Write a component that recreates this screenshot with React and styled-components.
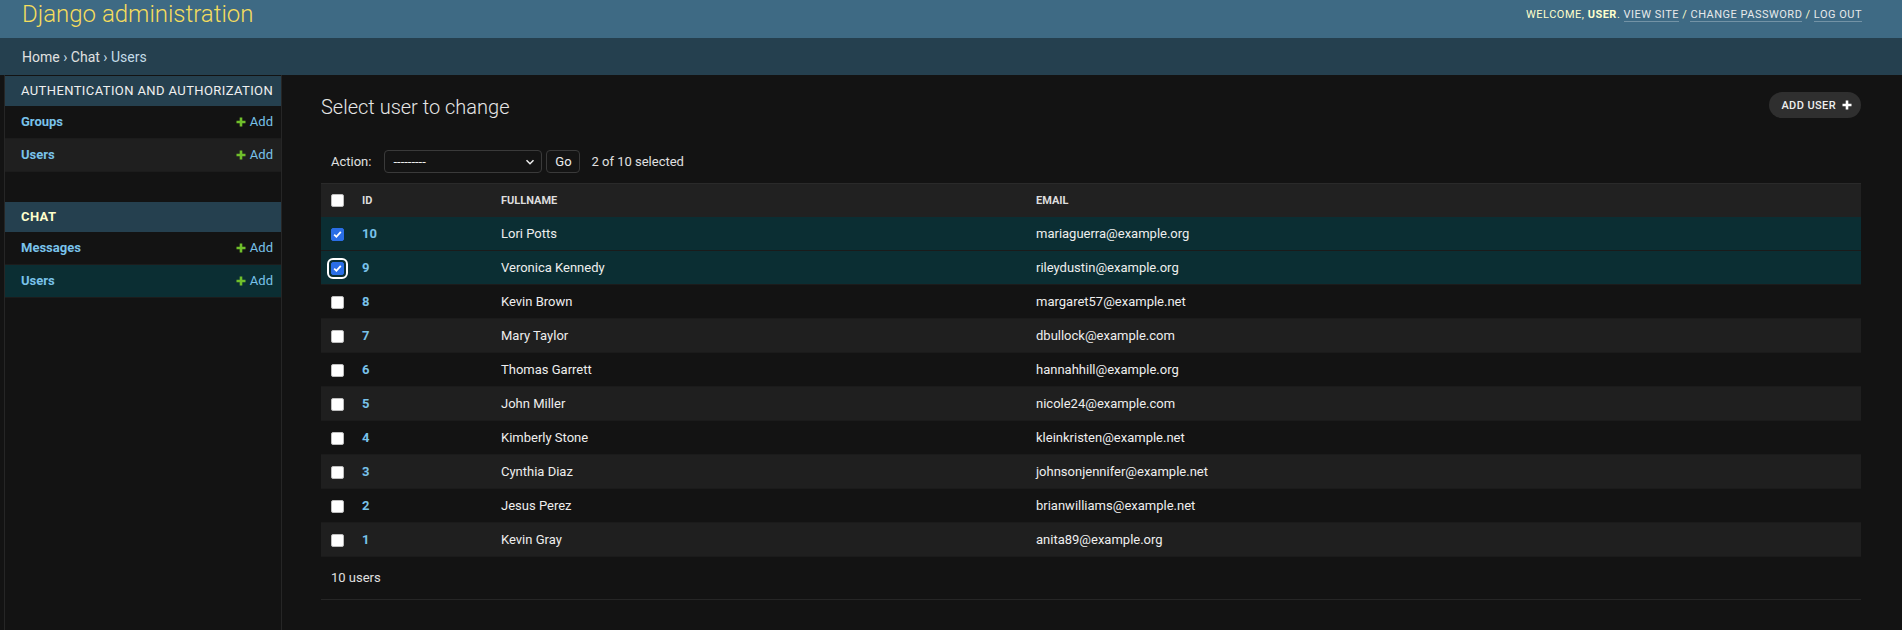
import React from 'react';
import styled, { createGlobalStyle } from 'styled-components';

const GlobalStyle = createGlobalStyle`
  html, body {
    margin: 0;
    padding: 0;
    background: #131313;
    color: #eeeeee;
    font-family: Roboto, "Liberation Sans", Arial, sans-serif;
    font-size: 14px;
  }
  * { box-sizing: border-box; }
`;

const Header = styled.div`
  height: 38px;
  background: #3e6a84;
  display: flex;
  justify-content: space-between;
  align-items: flex-start;
  padding: 0 40px 0 22px;
`;

const Branding = styled.div`
  font-size: 24px;
  font-weight: 300;
  line-height: 28px;
  color: #f5dd5d;
`;

const UserTools = styled.div`
  font-size: 11px;
  line-height: 30px;
  letter-spacing: 0.5px;
  text-transform: uppercase;
  color: #ffffcc;
  b { font-weight: 700; }
`;

const ToolLink = styled.a`
  color: #e6e9eb;
  text-decoration: none;
  border-bottom: 1px solid rgba(255, 255, 255, 0.28);
`;

const Breadcrumbs = styled.div`
  height: 37px;
  background: #25404f;
  display: flex;
  align-items: center;
  padding: 0 22px;
  font-size: 14px;
  color: #c4dce8;
  a { color: #e0e0e0; text-decoration: none; }
`;

const Main = styled.div`
  display: flex;
  min-height: calc(100vh - 75px);
`;

const Toggle = styled.div`
  width: 5px;
  flex-shrink: 0;
  border-right: 1px solid #262626;
`;

const Sidebar = styled.nav`
  width: 277px;
  flex-shrink: 0;
  padding-top: 1px;
  border-right: 1px solid #262626;
`;

const Module = styled.div`
  margin-bottom: 30px;
`;

const Caption = styled.div`
  height: 30px;
  display: flex;
  align-items: center;
  padding: 0 12px 1px 16px;
  background: #25404f;
  font-size: 13px;
  letter-spacing: 0.4px;
  white-space: nowrap;
  text-transform: uppercase;
  color: ${p => (p.$current ? '#ffffcc' : '#f0f0f0')};
  font-weight: ${p => (p.$current ? 700 : 400)};
`;

const NavRow = styled.div`
  height: 33px;
  display: flex;
  align-items: center;
  justify-content: space-between;
  padding: 0 8px 1px 16px;
  border-bottom: 1px solid #1c1c1c;
  background: ${p => (p.$current ? '#0b2e33' : p.$alt ? '#1f1f1f' : 'transparent')};
  font-size: 13px;
`;

const ModelLink = styled.a`
  color: #79c2ea;
  font-weight: 700;
  text-decoration: none;
`;

const AddLink = styled.a`
  display: flex;
  align-items: center;
  gap: 4px;
  color: #79c2ea;
  text-decoration: none;
`;

const Content = styled.div`
  flex: 1;
  padding: 17px 41px 20px 39px;
  min-width: 0;
`;

const TitleRow = styled.div`
  display: flex;
  justify-content: space-between;
  align-items: center;
  height: 26px;
`;

const Title = styled.h1`
  margin: 0;
  font-size: 20px;
  font-weight: 300;
  line-height: 26px;
  color: #e6e6e6;
  padding-top: 4px;
`;

const AddButton = styled.a`
  height: 26px;
  display: flex;
  align-items: center;
  gap: 6px;
  padding: 0 9px 0 12px;
  border-radius: 13px;
  background: #2f2f2f;
  color: #eeeeee;
  font-size: 11px;
  font-weight: 500;
  letter-spacing: 0.4px;
  text-transform: uppercase;
  text-decoration: none;
`;

const Actions = styled.div`
  margin-top: 22px;
  padding: 10px;
  display: flex;
  align-items: center;
  font-size: 13px;
  color: #e0e0e0;
`;

const Select = styled.div`
  width: 158px;
  height: 23px;
  margin-left: 13px;
  border: 1px solid #3a3a3a;
  border-radius: 4px;
  background: #141414;
  display: flex;
  align-items: center;
  justify-content: space-between;
  padding: 0 6px 0 8px;
  font-size: 13px;
  color: #eeeeee;
`;

const GoButton = styled.button`
  width: 34px;
  height: 23px;
  margin-left: 4px;
  border: 1px solid #3a3a3a;
  border-radius: 4px;
  background: #141414;
  color: #eeeeee;
  font-family: inherit;
  font-size: 13px;
  padding: 0;
`;

const Counter = styled.span`
  margin-left: 11px;
`;

const Table = styled.table`
  width: 100%;
  border-collapse: collapse;
  table-layout: fixed;
  font-size: 13px;
`;

const HeadCell = styled.th`
  background: #212121;
  border-top: 1px solid #2a2a2a;
  height: 33px;
  padding: 0 8px;
  text-align: ${p => (p.$center ? 'center' : 'left')};
  font-size: 11px;
  font-weight: 700;
  text-transform: uppercase;
  color: #dddddd;
  vertical-align: middle;
`;

const Row = styled.tr`
  background: ${p => (p.$selected ? '#0b2e33' : p.$alt ? '#1f1f1f' : 'transparent')};
`;

const Cell = styled.td`
  height: 34px;
  padding: 0 8px;
  border-bottom: 1px solid #1b1b1b;
  text-align: ${p => (p.$center ? 'center' : 'left')};
  vertical-align: middle;
  color: #eeeeee;
`;

const IdLink = styled.a`
  color: #79c2ea;
  font-weight: 700;
  text-decoration: none;
`;

const Check = styled.span`
  display: inline-block;
  vertical-align: middle;
  width: 13px;
  height: 13px;
  border-radius: 2px;
  background: ${p => (p.$checked ? '#2a6ee6' : '#ffffff')};
  border: 1px solid ${p => (p.$checked ? '#2a6ee6' : '#bdbdbd')};
  outline: ${p => (p.$focus ? '2px solid #ffffff' : 'none')};
  outline-offset: 2px;
  position: relative;
  svg { position: absolute; left: 1px; top: 1px; }
`;

const Paginator = styled.div`
  padding: 10px;
  line-height: 22px;
  font-size: 13px;
  color: #e0e0e0;
  border-bottom: 1px solid #262626;
`;

const PlusIcon = ({ color, size = 10 }) => (
  <svg width={size} height={size} viewBox="0 0 10 10">
    <path d="M5 0.5v9M0.5 5h9" stroke={color} strokeWidth="2.6" />
  </svg>
);

const Checkbox = ({ checked, focus }) => (
  <Check $checked={checked} $focus={focus}>
    {checked && (
      <svg width="9" height="9" viewBox="0 0 9 9">
        <path d="M1.2 4.6l2.2 2.2 4.4-5" stroke="#fff" strokeWidth="1.8" fill="none" />
      </svg>
    )}
  </Check>
);

const users = [
  { id: 10, name: 'Lori Potts', email: 'mariaguerra@example.org', selected: true },
  { id: 9, name: 'Veronica Kennedy', email: 'rileydustin@example.org', selected: true, focus: true },
  { id: 8, name: 'Kevin Brown', email: 'margaret57@example.net' },
  { id: 7, name: 'Mary Taylor', email: 'dbullock@example.com' },
  { id: 6, name: 'Thomas Garrett', email: 'hannahhill@example.org' },
  { id: 5, name: 'John Miller', email: 'nicole24@example.com' },
  { id: 4, name: 'Kimberly Stone', email: 'kleinkristen@example.net' },
  { id: 3, name: 'Cynthia Diaz', email: 'johnsonjennifer@example.net' },
  { id: 2, name: 'Jesus Perez', email: 'brianwilliams@example.net' },
  { id: 1, name: 'Kevin Gray', email: 'anita89@example.org' },
];

const App = () => {
  return (
    <>
      <GlobalStyle />
      <Header>
        <Branding>Django administration</Branding>
        <UserTools>
          Welcome, <b>user</b>. <ToolLink>View site</ToolLink> / <ToolLink>Change password</ToolLink> / <ToolLink>Log out</ToolLink>
        </UserTools>
      </Header>
      <Breadcrumbs>
        <a>Home</a>&nbsp;›&nbsp;<a>Chat</a>&nbsp;›&nbsp;Users
      </Breadcrumbs>
      <Main>
        <Toggle />
        <Sidebar>
          <Module>
            <Caption>Authentication and Authorization</Caption>
            <NavRow>
              <ModelLink>Groups</ModelLink>
              <AddLink><PlusIcon color="#70bf2b" />Add</AddLink>
            </NavRow>
            <NavRow $alt>
              <ModelLink>Users</ModelLink>
              <AddLink><PlusIcon color="#70bf2b" />Add</AddLink>
            </NavRow>
          </Module>
          <Module>
            <Caption $current>Chat</Caption>
            <NavRow>
              <ModelLink>Messages</ModelLink>
              <AddLink><PlusIcon color="#70bf2b" />Add</AddLink>
            </NavRow>
            <NavRow $current>
              <ModelLink>Users</ModelLink>
              <AddLink><PlusIcon color="#70bf2b" />Add</AddLink>
            </NavRow>
          </Module>
        </Sidebar>
        <Content>
          <TitleRow>
            <Title>Select user to change</Title>
            <AddButton>Add user <PlusIcon color="#ffffff" /></AddButton>
          </TitleRow>
          <Actions>
            <span>Action:</span>
            <Select>
              <span>---------</span>
              <svg width="10" height="10" viewBox="0 0 10 10">
                <path d="M1.5 3.2l3.5 3.5 3.5-3.5" stroke="#eee" strokeWidth="1.5" fill="none" />
              </svg>
            </Select>
            <GoButton>Go</GoButton>
            <Counter>2 of 10 selected</Counter>
          </Actions>
          <Table>
            <colgroup>
              <col style={{ width: '33px' }} />
              <col style={{ width: '139px' }} />
              <col style={{ width: '535px' }} />
              <col />
            </colgroup>
            <thead>
              <tr>
                <HeadCell $center><Checkbox /></HeadCell>
                <HeadCell>Id</HeadCell>
                <HeadCell>Fullname</HeadCell>
                <HeadCell>Email</HeadCell>
              </tr>
            </thead>
            <tbody>
              {users.map((u, i) => (
                <Row key={u.id} $selected={u.selected} $alt={i % 2 === 1}>
                  <Cell $center><Checkbox checked={u.selected} focus={u.focus} /></Cell>
                  <Cell><IdLink>{u.id}</IdLink></Cell>
                  <Cell>{u.name}</Cell>
                  <Cell>{u.email}</Cell>
                </Row>
              ))}
            </tbody>
          </Table>
          <Paginator>10 users</Paginator>
        </Content>
      </Main>
    </>
  );
};

export default App;
